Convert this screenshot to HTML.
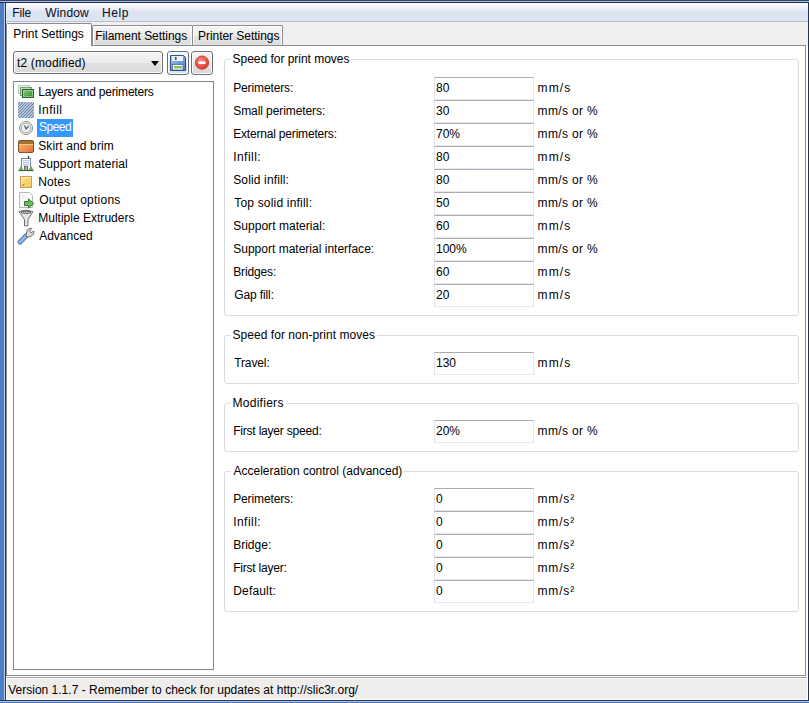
<!DOCTYPE html>
<html><head><meta charset="utf-8">
<style>
*{margin:0;padding:0;box-sizing:border-box}
html,body{width:809px;height:703px;overflow:hidden;background:#6f93c4}
body{position:relative;font-family:"Liberation Sans",sans-serif;font-size:12px;color:#000}
.a{position:absolute}
#frame{left:0;top:0;width:809px;height:703px;background:linear-gradient(90deg,#4a7ec8 0px,#4f7cbf 2px,#5a7fb4 4px,#b2caec 4px,#b2caec 5px,#2a3a58 5px)}
#ftop{left:0;top:0;width:809px;height:3px;background:linear-gradient(180deg,#2e4670 0px,#2e4670 1px,#a6bee2 1px,#a6bee2 2px,#1e2c46 2px)}
#fbot{left:0;top:700px;width:809px;height:3px;background:linear-gradient(180deg,#26364e 0px,#26364e 1px,#a8c4ec 1px,#a8c4ec 2px,#4c74bc 2px)}
#win{left:6px;top:3px;width:802px;height:697px;background:#fff}
#wr{left:808px;top:2px;width:1px;height:699px;background:#26344c}
#menubar{left:6px;top:3px;width:802px;height:19px;background:linear-gradient(180deg,#fefefe 0px,#f6f7fb 3px,#e6e8f4 7px,#dde4f1 9px,#dbe3f0 14px,#dde6f2 18px);border-bottom:1px solid #b9bdc7}
#tabsbg{left:6px;top:22px;width:802px;height:23px;background:linear-gradient(180deg,#f5f5f6 0px,#f0f0f0 2px)}
.menu{top:6px;color:#0b0b22}
#tabsbg{left:6px;top:22px;width:802px;height:24px;background:#f0f0f0}
.tab{top:25px;height:20px;border:1px solid #898c95;border-bottom:none;background:linear-gradient(180deg,#f6f6f6 0%,#ededed 50%,#e4e4e4 51%,#dedede 100%);border-radius:2px 2px 0 0;box-shadow:inset 1px 1px 0 #fff,inset -1px 0 0 #fff}
.tab>span{position:absolute;top:3px;white-space:nowrap}
#tabsel{left:6px;top:23px;width:86px;height:23px;border:1px solid #898c95;border-bottom:none;background:#fff;border-radius:2px 2px 0 0;z-index:2}
#panel{left:6px;top:45px;width:800px;height:631px;background:#fff;border:1px solid #898c95}
#status{left:6px;top:677px;width:801px;height:23px;background:#eeedeb;border-top:1px solid #a0a0a0;border-bottom:1px solid #fff;border-left:1px solid #fff;box-shadow:inset 0 1px 0 #fff}
#tree{left:13px;top:81px;width:201px;height:589px;border:1px solid #828790;background:#fff}
.ti{left:39px}
.ic{left:18px;width:16px;height:16px}
.grp{left:224px;width:575px;border:1px solid #d8dcdf;border-radius:3px}
.gt{left:231px;background:#fff;padding:0 2px}
.lb{left:234px}
.fd{left:434px;width:100px;height:23px;border:1px solid #e3e9ef;border-top-color:#abadb3;border-left-color:#e2e3ea;background:#fff}
.fd span{position:absolute;left:1px;top:3px}
.un{left:538px}
#combo{left:13px;top:51px;width:150px;height:23px;border:1px solid #707070;border-radius:3px;background:linear-gradient(180deg,#f4f4f4 0%,#ececec 50%,#e2e2e2 51%,#d9d9d9 100%);box-shadow:inset 0 0 0 1px #fafafa}
#arrow{left:137px;top:9px;width:0;height:0;border-left:4px solid transparent;border-right:4px solid transparent;border-top:5px solid #000}
.btn{top:51px;width:22px;height:24px;border:1px solid #707070;border-radius:3px;background:linear-gradient(180deg,#f4f4f4 0%,#ececec 50%,#e2e2e2 51%,#d9d9d9 100%);box-shadow:inset 0 0 0 1px #fafafa}
#bsave{background:linear-gradient(180deg,#f4f8fc 0%,#e8eff8 50%,#dde7f3 51%,#d4e0f0 100%);border-color:#6a6e78;box-shadow:inset 0 0 0 1px #fbfdff}
.sel{background:#3399ff;color:#fff;left:37px;padding:0 0 0 2px;width:36px;overflow:hidden;white-space:nowrap;height:18px;line-height:17px;top:119px !important;letter-spacing:-0.5px}
</style></head><body>
<div class="a" id="frame"></div>
<div class="a" id="ftop"></div>
<div class="a" id="fbot"></div>
<div class="a" id="win"></div>
<div class="a" id="wr"></div>
<div class="a" id="menubar"></div>
<div class="a" id="tabsbg"></div>
<div class="a menu" style="left:13px"><span style="white-space:nowrap;letter-spacing:-0.133px;margin-left:-0.80px">File</span></div>
<div class="a menu" style="left:45px"><span style="white-space:nowrap;letter-spacing:0.180px;margin-left:0.20px">Window</span></div>
<div class="a menu" style="left:103px"><span style="white-space:nowrap;letter-spacing:0.633px;margin-left:-1.10px">Help</span></div>

<div class="a" id="panel"></div>
<div class="a" id="tabsel"><span class="a" style="left:7px;top:3px"><span style="white-space:nowrap;letter-spacing:-0.069px;margin-left:-0.70px">Print Settings</span></span></div>
<div class="a tab" style="left:92px;width:101px"><span style="left:3px"><span style="white-space:nowrap;letter-spacing:-0.044px;margin-left:-0.80px">Filament Settings</span></span></div>
<div class="a tab" style="left:192px;width:91px"><span style="left:5px"><span style="white-space:nowrap;letter-spacing:-0.040px;margin-left:0.00px">Printer Settings</span></span></div>

<div class="a" id="combo"><span class="a" style="left:3px;top:4px"><span style="white-space:nowrap;letter-spacing:0.158px;margin-left:0.00px">t2 (modified)</span></span><span class="a" id="arrow"></span></div>
<div class="a btn" id="bsave" style="left:167px"></div>
<div class="a btn" id="bdel" style="left:191px"></div>
<div class="a" id="tree"></div>
<div class="a ic" style="top:84px"></div>
<div class="a ti" style="top:85px"><span style="white-space:nowrap;letter-spacing:-0.190px;margin-left:-0.80px">Layers and perimeters</span></div>
<div class="a ic" style="top:102px"></div>
<div class="a ti" style="top:103px"><span style="white-space:nowrap;letter-spacing:0.480px;margin-left:-0.80px">Infill</span></div>
<div class="a ic" style="top:120px"></div>
<div class="a ti sel" style="top:121px">Speed</div>
<div class="a ic" style="top:138px"></div>
<div class="a ti" style="top:139px"><span style="white-space:nowrap;letter-spacing:0.123px;margin-left:-0.80px">Skirt and brim</span></div>
<div class="a ic" style="top:156px"></div>
<div class="a ti" style="top:157px"><span style="white-space:nowrap;letter-spacing:0.100px;margin-left:-0.80px">Support material</span></div>
<div class="a ic" style="top:174px"></div>
<div class="a ti" style="top:175px"><span style="white-space:nowrap;letter-spacing:0.150px;margin-left:-0.80px">Notes</span></div>
<div class="a ic" style="top:192px"></div>
<div class="a ti" style="top:193px"><span style="white-space:nowrap;letter-spacing:0.238px;margin-left:0.20px">Output options</span></div>
<div class="a ic" style="top:210px"></div>
<div class="a ti" style="top:211px"><span style="white-space:nowrap;letter-spacing:0.012px;margin-left:-0.80px">Multiple Extruders</span></div>
<div class="a ic" style="top:228px"></div>
<div class="a ti" style="top:229px"><span style="white-space:nowrap;letter-spacing:0.000px;margin-left:0.20px">Advanced</span></div>
<div class="a grp" style="top:59px;height:257px"></div>
<div class="a gt" style="top:52px"><span style="white-space:nowrap;letter-spacing:-0.020px;margin-left:-0.50px">Speed for print moves</span></div>
<div class="a lb" style="top:81px"><span style="white-space:nowrap;letter-spacing:-0.130px;margin-left:-0.80px">Perimeters:</span></div>
<div class="a fd" style="top:77px"><span>80</span></div>
<div class="a un" style="top:81px"><span style="white-space:nowrap;letter-spacing:1.067px;margin-left:-0.40px">mm/s</span></div>
<div class="a lb" style="top:104px"><span style="white-space:nowrap;letter-spacing:-0.081px;margin-left:-0.80px">Small perimeters:</span></div>
<div class="a fd" style="top:100px"><span>30</span></div>
<div class="a un" style="top:104px"><span style="white-space:nowrap;letter-spacing:0.350px;margin-left:-0.40px">mm/s or %</span></div>
<div class="a lb" style="top:127px"><span style="white-space:nowrap;letter-spacing:-0.189px;margin-left:-0.80px">External perimeters:</span></div>
<div class="a fd" style="top:123px"><span>70%</span></div>
<div class="a un" style="top:127px"><span style="white-space:nowrap;letter-spacing:0.350px;margin-left:-0.40px">mm/s or %</span></div>
<div class="a lb" style="top:150px"><span style="white-space:nowrap;letter-spacing:0.450px;margin-left:-0.80px">Infill:</span></div>
<div class="a fd" style="top:146px"><span>80</span></div>
<div class="a un" style="top:150px"><span style="white-space:nowrap;letter-spacing:1.067px;margin-left:-0.40px">mm/s</span></div>
<div class="a lb" style="top:173px"><span style="white-space:nowrap;letter-spacing:0.142px;margin-left:-0.80px">Solid infill:</span></div>
<div class="a fd" style="top:169px"><span>80</span></div>
<div class="a un" style="top:173px"><span style="white-space:nowrap;letter-spacing:0.350px;margin-left:-0.40px">mm/s or %</span></div>
<div class="a lb" style="top:196px"><span style="white-space:nowrap;letter-spacing:0.194px;margin-left:0.20px">Top solid infill:</span></div>
<div class="a fd" style="top:192px"><span>50</span></div>
<div class="a un" style="top:196px"><span style="white-space:nowrap;letter-spacing:0.350px;margin-left:-0.40px">mm/s or %</span></div>
<div class="a lb" style="top:219px"><span style="white-space:nowrap;letter-spacing:0.044px;margin-left:-0.80px">Support material:</span></div>
<div class="a fd" style="top:215px"><span>60</span></div>
<div class="a un" style="top:219px"><span style="white-space:nowrap;letter-spacing:1.067px;margin-left:-0.40px">mm/s</span></div>
<div class="a lb" style="top:242px"><span style="white-space:nowrap;letter-spacing:0.008px;margin-left:-0.80px">Support material interface:</span></div>
<div class="a fd" style="top:238px"><span>100%</span></div>
<div class="a un" style="top:242px"><span style="white-space:nowrap;letter-spacing:0.350px;margin-left:-0.40px">mm/s or %</span></div>
<div class="a lb" style="top:265px"><span style="white-space:nowrap;letter-spacing:-0.129px;margin-left:-0.80px">Bridges:</span></div>
<div class="a fd" style="top:261px"><span>60</span></div>
<div class="a un" style="top:265px"><span style="white-space:nowrap;letter-spacing:1.067px;margin-left:-0.40px">mm/s</span></div>
<div class="a lb" style="top:288px"><span style="white-space:nowrap;letter-spacing:-0.112px;margin-left:0.20px">Gap fill:</span></div>
<div class="a fd" style="top:284px"><span>20</span></div>
<div class="a un" style="top:288px"><span style="white-space:nowrap;letter-spacing:1.067px;margin-left:-0.40px">mm/s</span></div>
<div class="a grp" style="top:335px;height:49px"></div>
<div class="a gt" style="top:328px"><span style="white-space:nowrap;letter-spacing:0.046px;margin-left:-0.50px">Speed for non-print moves</span></div>
<div class="a lb" style="top:356px"><span style="white-space:nowrap;letter-spacing:-0.117px;margin-left:0.20px">Travel:</span></div>
<div class="a fd" style="top:352px"><span>130</span></div>
<div class="a un" style="top:356px"><span style="white-space:nowrap;letter-spacing:1.067px;margin-left:-0.40px">mm/s</span></div>
<div class="a grp" style="top:403px;height:49px"></div>
<div class="a gt" style="top:396px"><span style="white-space:nowrap;letter-spacing:0.275px;margin-left:-0.50px">Modifiers</span></div>
<div class="a lb" style="top:424px"><span style="white-space:nowrap;letter-spacing:-0.206px;margin-left:-0.80px">First layer speed:</span></div>
<div class="a fd" style="top:420px"><span>20%</span></div>
<div class="a un" style="top:424px"><span style="white-space:nowrap;letter-spacing:0.350px;margin-left:-0.40px">mm/s or %</span></div>
<div class="a grp" style="top:471px;height:141px"></div>
<div class="a gt" style="top:464px"><span style="white-space:nowrap;letter-spacing:0.003px;margin-left:0.50px">Acceleration control (advanced)</span></div>
<div class="a lb" style="top:492px"><span style="white-space:nowrap;letter-spacing:-0.130px;margin-left:-0.80px">Perimeters:</span></div>
<div class="a fd" style="top:488px"><span>0</span></div>
<div class="a un" style="top:492px"><span style="white-space:nowrap;letter-spacing:0.825px;margin-left:-0.50px">mm/s&#178;</span></div>
<div class="a lb" style="top:515px"><span style="white-space:nowrap;letter-spacing:0.450px;margin-left:-0.80px">Infill:</span></div>
<div class="a fd" style="top:511px"><span>0</span></div>
<div class="a un" style="top:515px"><span style="white-space:nowrap;letter-spacing:0.825px;margin-left:-0.50px">mm/s&#178;</span></div>
<div class="a lb" style="top:538px"><span style="white-space:nowrap;letter-spacing:-0.000px;margin-left:-0.80px">Bridge:</span></div>
<div class="a fd" style="top:534px"><span>0</span></div>
<div class="a un" style="top:538px"><span style="white-space:nowrap;letter-spacing:0.825px;margin-left:-0.50px">mm/s&#178;</span></div>
<div class="a lb" style="top:561px"><span style="white-space:nowrap;letter-spacing:-0.209px;margin-left:-0.80px">First layer:</span></div>
<div class="a fd" style="top:557px"><span>0</span></div>
<div class="a un" style="top:561px"><span style="white-space:nowrap;letter-spacing:0.825px;margin-left:-0.50px">mm/s&#178;</span></div>
<div class="a lb" style="top:584px"><span style="white-space:nowrap;letter-spacing:0.171px;margin-left:-0.80px">Default:</span></div>
<div class="a fd" style="top:580px"><span>0</span></div>
<div class="a un" style="top:584px"><span style="white-space:nowrap;letter-spacing:0.825px;margin-left:-0.50px">mm/s&#178;</span></div>
<svg class="a" style="left:0;top:0;z-index:5" width="809" height="703" viewBox="0 0 809 703">
<defs>
<linearGradient id="gL" x1="0" y1="0" x2="1" y2="1"><stop offset="0" stop-color="#8ed486"/><stop offset="1" stop-color="#348434"/></linearGradient>
<linearGradient id="gB" x1="0" y1="0" x2="1" y2="1"><stop offset="0" stop-color="#f6c070"/><stop offset="1" stop-color="#e0703a"/></linearGradient>
<linearGradient id="gN" x1="0" y1="0" x2="1" y2="1"><stop offset="0" stop-color="#fff4b0"/><stop offset="1" stop-color="#f8c848"/></linearGradient>
<radialGradient id="gR" cx=".4" cy=".35" r=".7"><stop offset="0" stop-color="#ff8a80"/><stop offset="1" stop-color="#d8322c"/></radialGradient>
<linearGradient id="gF" x1="0" y1="0" x2="1" y2="1"><stop offset="0" stop-color="#9cc4f4"/><stop offset="1" stop-color="#4a7cc8"/></linearGradient>
<clipPath id="cI"><rect x="18" y="102" width="16" height="16"/></clipPath>
</defs>
<!-- layers -->
<rect x="18.5" y="85.5" width="11" height="8" fill="#eef6ee" stroke="#b8ccb8"/>
<rect x="20.5" y="87.5" width="11" height="8" fill="#b8e2b0" stroke="#74a074"/>
<rect x="22.5" y="89.5" width="11" height="8" fill="url(#gL)" stroke="#285e28"/>
<rect x="23.5" y="90.5" width="9" height="6" fill="none" stroke="#a8dca0" stroke-opacity=".7"/>
<!-- infill -->
<g clip-path="url(#cI)"><rect x="18" y="102" width="16" height="16" fill="#f6f9fd"/>
<path d="M18 105L21 102M18 108L24 102M18 111L27 102M18 114L30 102M18 117L33 102M18 120L36 102M21 120L36 105M24 120L36 108M27 120L36 111M30 120L36 114M33 120L36 117" stroke="#b4cdef" stroke-width="1.2"/>
<path d="M18 104L20 102M18 107L23 102M18 110L26 102M18 113L29 102M18 116L32 102M18 119L35 102M21 119L36 104M24 119L36 107M27 119L36 110M30 119L36 113M33 119L36 116" stroke="#687c9c" stroke-width="1.05"/>
</g>
<!-- clock -->
<circle cx="26" cy="128" r="6.5" fill="#f2f2ea" stroke="#8a8a80"/>
<circle cx="26" cy="128" r="4.6" fill="#eef4fc" stroke="#a4a49a" stroke-width=".9"/>
<path d="M24.6 125.6L26 129L28.6 126.2" stroke="#4a6898" stroke-width="1.3" fill="none"/>
<!-- box -->
<rect x="18.5" y="140.5" width="15" height="12" rx="1.5" fill="url(#gB)" stroke="#7a5430"/>
<rect x="19" y="141" width="14" height="3" fill="#a8702e"/>
<line x1="19" y1="144.5" x2="33" y2="144.5" stroke="#f8c88a"/>
<!-- building -->
<rect x="21.5" y="158.5" width="9" height="12" fill="#f6f8fc" stroke="#7c8298"/>
<rect x="23" y="160" width="6" height="5.5" fill="#b8caf0"/>
<line x1="23" y1="161.5" x2="29" y2="161.5" stroke="#f0f4ff" stroke-width=".8"/>
<line x1="23" y1="163.5" x2="29" y2="163.5" stroke="#f0f4ff" stroke-width=".8"/>
<rect x="24.5" y="166.5" width="3" height="4" fill="#b8b098" stroke="#5a5448" stroke-width=".8"/>
<line x1="28.5" y1="156" x2="28.5" y2="158.5" stroke="#3a3a3a" stroke-width="1.3"/>
<path d="M18.5 170.5L21 165.5L23.5 170.5ZM28.5 170.5L31 165.5L33.5 170.5Z" fill="#6aae5e"/>
<line x1="18.5" y1="170.5" x2="33.5" y2="170.5" stroke="#3a663a" stroke-width="1.2"/>
<!-- notes -->
<rect x="20.5" y="176.5" width="11" height="11" fill="url(#gN)" stroke="#d49a58"/>
<path d="M23 179.5H30M23 181.5H30M26 183.5H30" stroke="#e8c070" stroke-width=".8"/>
<path d="M22 186.2L24.6 183.6" stroke="#c88a38" stroke-width="1.3"/>
<!-- output -->
<path d="M19.5 192.5H29.5L32.5 195.5V207.5H19.5Z" fill="#fbfbfb" stroke="#b8b8b8"/><path d="M21.5 195.5H27M21.5 197.5H29" stroke="#e2e2e2" stroke-width=".8"/>
<path d="M24.5 201.5H28.5V199L33.8 203.5L28.5 208V205.5H24.5Z" fill="#6cba5c" stroke="#3a7636"/>
<!-- funnel -->
<path d="M19 211.5Q26 209 33 211.5L28 219.5V225.5L24.5 226V219.5Z" fill="#e4e4e4" stroke="#707070"/>
<ellipse cx="26" cy="212.2" rx="5" ry="1.1" fill="none" stroke="#505050"/>
<!-- wrench -->
<path d="M20 242L26 236" stroke="#5a78b0" stroke-width="5" stroke-linecap="round"/>
<path d="M20 242L26 236" stroke="#92b6ec" stroke-width="3" stroke-linecap="round"/>
<path d="M25.8 236.2L26.6 232Q27 228.8 30.4 228.3L31.6 228.4L29.8 231.2L31 232.8L33.8 231Q34.6 235 31 236.2L28.4 237.2Z" fill="#dadada" stroke="#6e6e6e" stroke-linejoin="round"/>
<!-- save -->
<path d="M170.5 55.5H183.5L185.5 57.5V70.5H170.5Z" fill="url(#gF)" stroke="#34508c"/>
<rect x="172" y="56" width="11" height="5" fill="#eef3fa"/>
<rect x="175" y="57" width="1.6" height="3" fill="#34508c"/>
<rect x="172.5" y="64.5" width="10.5" height="5.5" fill="#f6faff" stroke="#34508c" stroke-width=".6"/>
<rect x="174" y="66" width="8" height="2.4" fill="#86c246"/>
<!-- delete -->
<circle cx="202" cy="62.6" r="6.6" fill="url(#gR)" stroke="#c04038"/>
<rect x="198.5" y="61.4" width="7" height="2.6" fill="#fff"/>
</svg>
<div class="a" id="status"></div>
<div class="a" style="left:8px;top:683px"><span style="white-space:nowrap;letter-spacing:0.008px;margin-left:0.18px">Version 1.1.7 - Remember to check for updates at http://slic3r.org/</span></div>

</body></html>
